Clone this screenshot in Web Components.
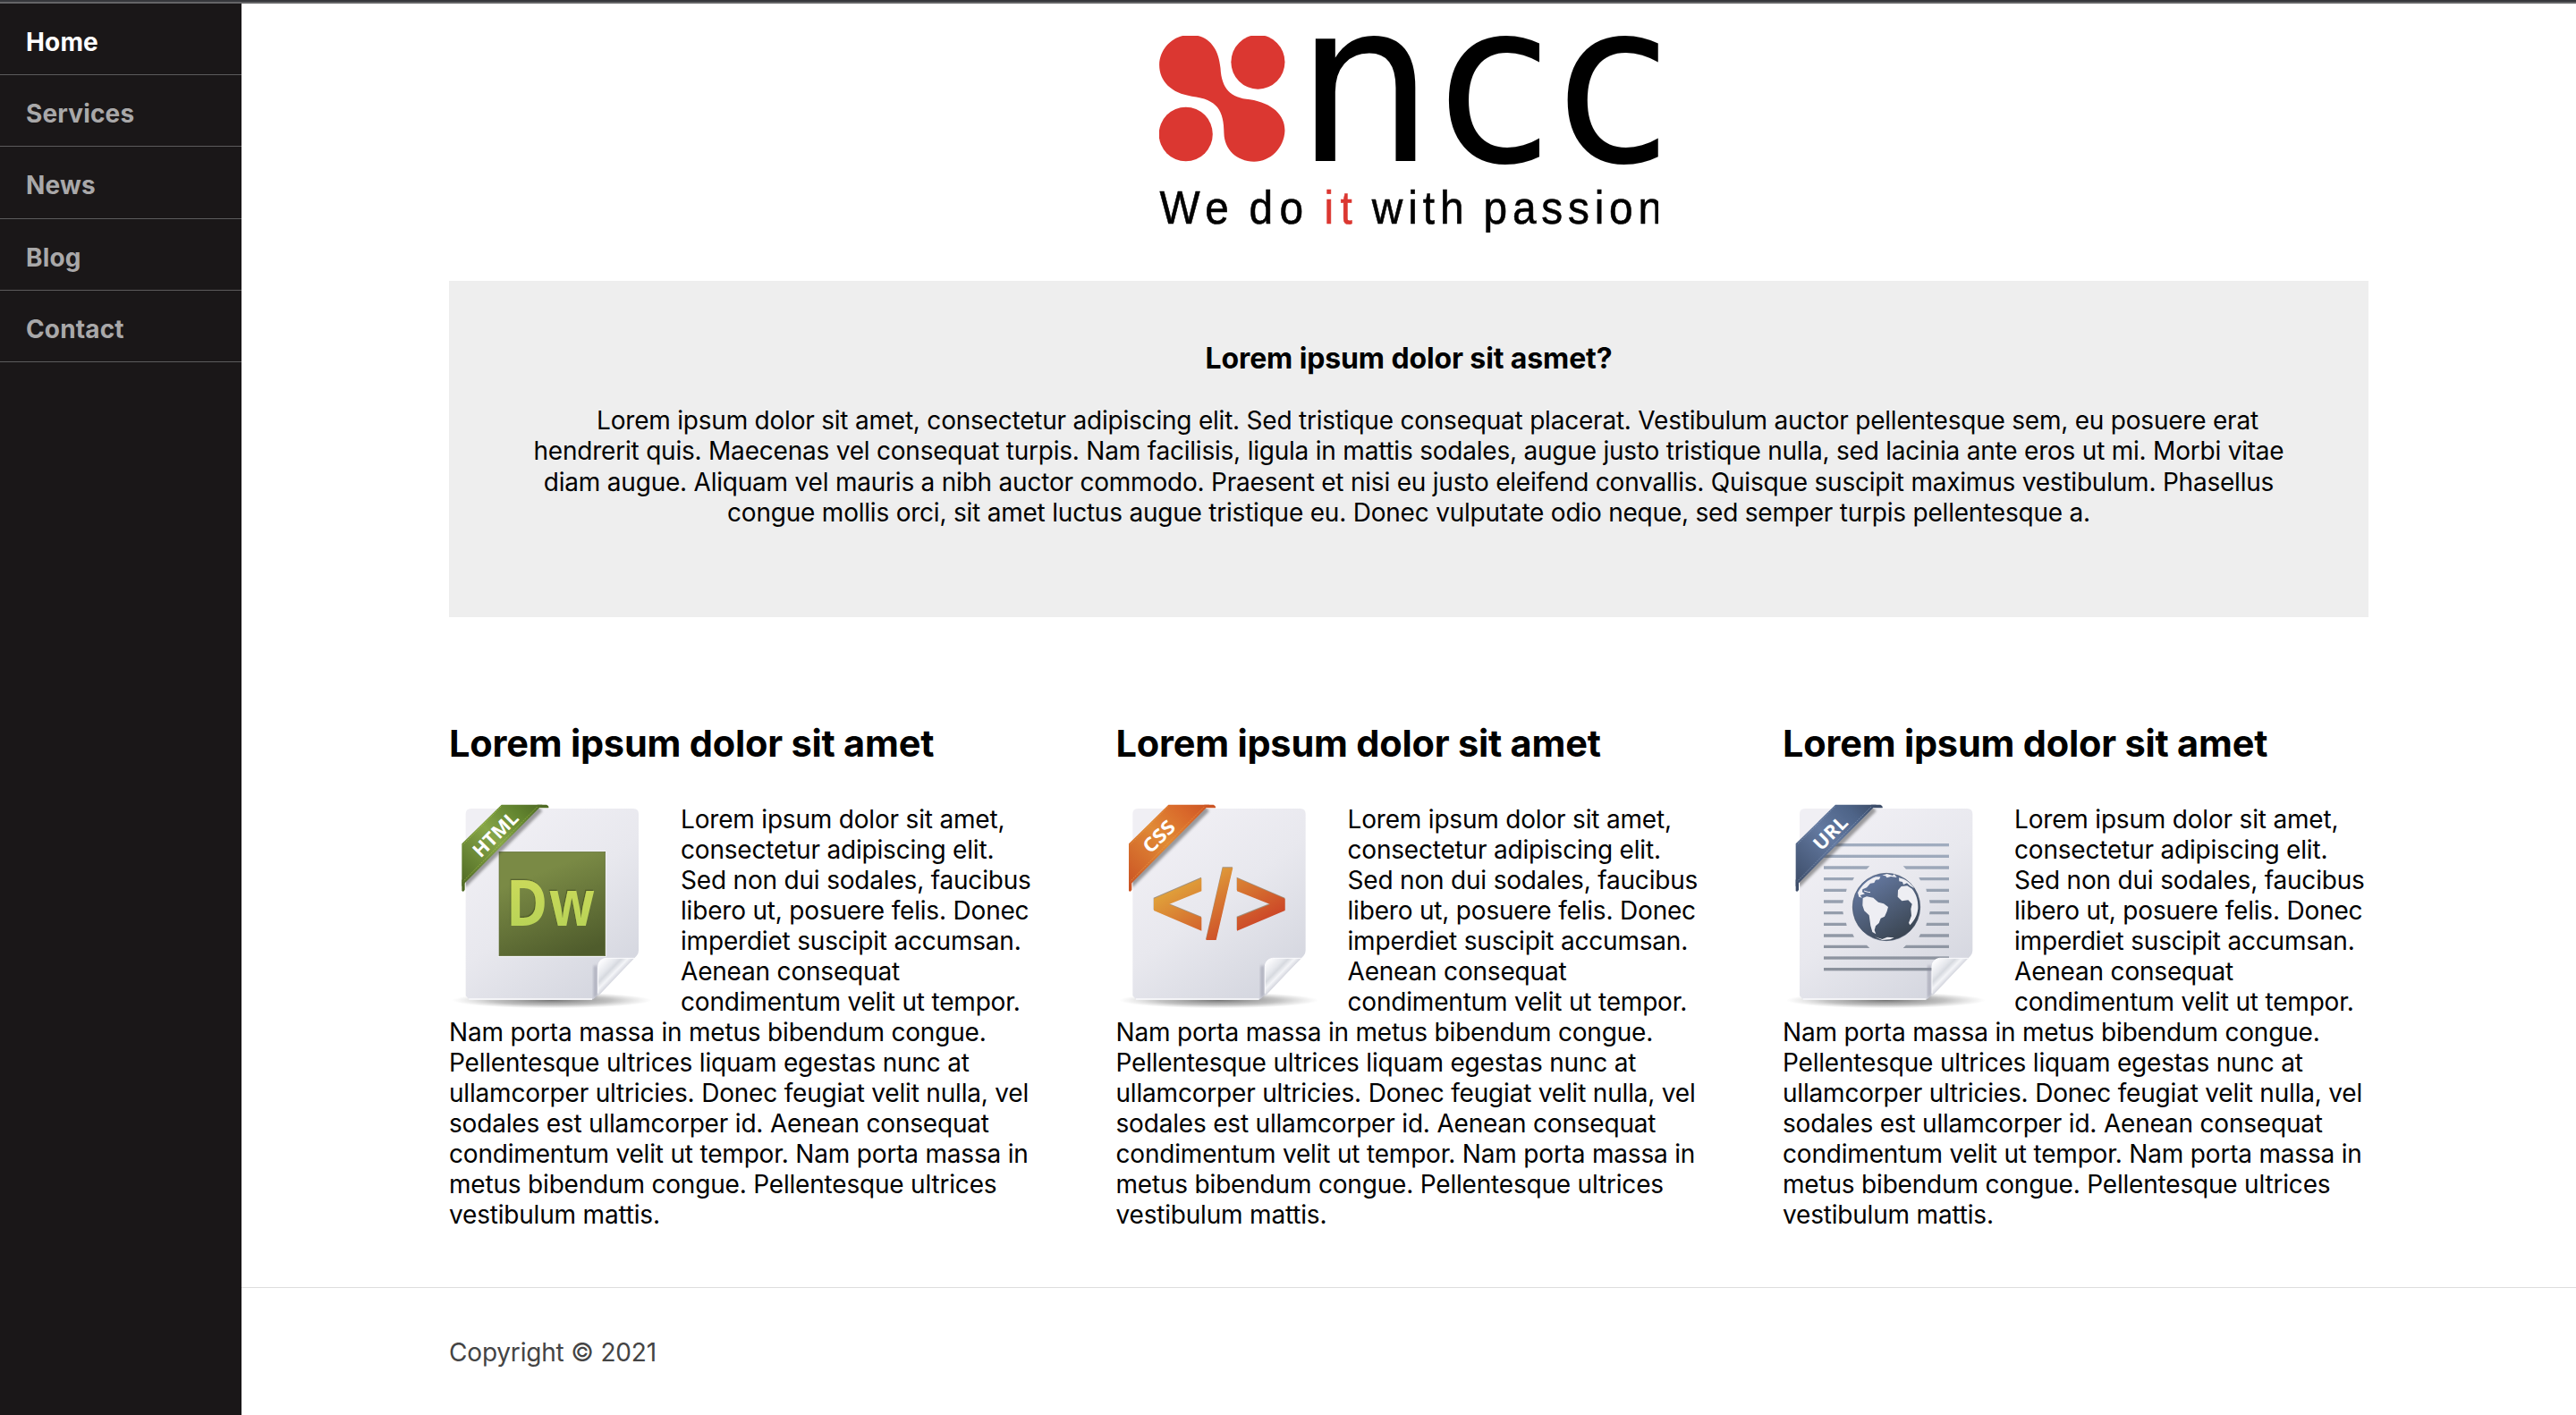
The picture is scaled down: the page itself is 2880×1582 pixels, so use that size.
<!DOCTYPE html>
<html lang="en">
<head>
<meta charset="utf-8">
<title>ncc</title>
<style>
html,body{margin:0;padding:0;background:#fff}
body{font-family:Inter,"Noto Sans",sans-serif;color:#000;width:2880px;height:1582px;overflow:hidden}
</style>
</head>
<body>
<ncc-page></ncc-page>
<script>
class Base extends HTMLElement{
  connectedCallback(){ if(!this.shadowRoot) this.attachShadow({mode:'open'}).innerHTML=this.view(); }
}

class NavItem extends Base{
  view(){return `<style>
    :host{display:block;box-sizing:border-box;height:var(--h,80px);border-bottom:1px solid #5c5b5c;padding:4px 0 0 29px;
      font-size:28px;font-weight:650;line-height:78px;letter-spacing:.15px;color:#a9a8a9}
    :host([active]){color:#fff}
    a{display:block}
  </style><a><slot></slot></a>`}
}
customElements.define('nav-item',NavItem);

class NavSide extends Base{
  view(){return `<style>
    :host{display:block;width:270px;flex:none;background:#1a1718}
  </style><nav>
    <nav-item active>Home</nav-item>
    <nav-item>Services</nav-item>
    <nav-item style="--h:81px">News</nav-item>
    <nav-item>Blog</nav-item>
    <nav-item>Contact</nav-item>
  </nav>`}
}
customElements.define('nav-side',NavSide);

class NccLogo extends Base{
  view(){return `<style>
    :host{display:block;width:558px;height:220px}
    svg{display:block;overflow:hidden}
    .n{font-family:"DejaVu Sans",sans-serif;font-size:250px}
    .t{font-family:"Liberation Sans",sans-serif;font-size:52px;stroke-width:.6px}
  </style>
  <svg width="558" height="220" viewBox="1296 40 558 220">
    <g fill="#db3731" transform="translate(1270 20) scale(.3954 .33333)">
      <path d="M66 157C68 98 108 57 153 57C206 57 234 102 239 168C242 238 268 268 322 274C386 286 421 326 421 378C419 437 380 482 334 482C284 482 250 440 249 388C249 310 230 273 158 263C100 253 66 213 66 157Z"/>
      <ellipse cx="345" cy="148" rx="76" ry="91"/>
      <ellipse cx="141" cy="390" rx="76" ry="91"/>
    </g>
    <g class="n">
      <text transform="translate(1448.8 179.7) scale(.974 1)">n</text>
      <text transform="translate(1607 179.7) scale(.935 1)">c</text>
      <text transform="translate(1739.8 179.7) scale(.935 1)">c</text>
    </g>
    <g class="t" stroke="#000">
      <text transform="translate(1296.5 250) scale(.92 1)" textLength="84">We</text>
      <text transform="translate(1396.5 250) scale(.92 1)" textLength="66">do</text>
      <text transform="translate(1480.5 250) scale(.92 1)" textLength="34" fill="#db3731" stroke="#db3731">it</text>
      <text transform="translate(1533.7 250) scale(.92 1)" textLength="112">with</text>
      <text transform="translate(1658.5 250) scale(.92 1)" textLength="217">passion</text>
    </g>
  </svg>`}
}
customElements.define('ncc-logo',NccLogo);

class HeroBox extends Base{
  view(){return `<style>
    :host{display:block;box-sizing:border-box;height:376px;background:#eee;text-align:center;padding-top:67px}
    h3{margin:0;font-size:32px;line-height:40px;font-weight:700;letter-spacing:-.12px}
    p{margin:32px 0 0;font-size:28px;line-height:34.4px;letter-spacing:-.215px;white-space:nowrap}
    p::before{content:"";display:inline-block;width:42px}
  </style><h3><slot name="title"></slot></h3><p><slot></slot></p>`}
}
customElements.define('hero-box',HeroBox);

const ART={
  html:{c:['#62842f','#86a548','#4f6a24','#b9d24a'],dx:0,label:'HTML',lx:143,ly:240,len:186,
    art:`<defs><linearGradient id="sq" x1=".3" y1="0" x2=".7" y2="1"><stop offset=".2" stop-color="#7a8a45"/><stop offset="1" stop-color="#4f5c2c"/></linearGradient>
      <linearGradient id="dw" x1="0" y1="0" x2="0" y2="1"><stop offset="0" stop-color="#d3dc5c"/><stop offset="1" stop-color="#b2d156"/></linearGradient>
      <filter id="ds" x="-10%" y="-10%" width="120%" height="120%"><feDropShadow dx="-3" dy="-4" stdDeviation="1" flood-color="#3f4c1c" flood-opacity=".6"/></filter></defs>
      <rect x="202" y="214" width="362" height="356" fill="#f6f6fa"/>
      <rect x="205" y="217" width="356" height="349" fill="url(#sq)" stroke="#5f6c38" stroke-width="2"/>
      <g font-family="Open Sans,sans-serif" font-weight="700" font-size="217" fill="url(#dw)" filter="url(#ds)"><text x="229" y="464" textLength="139" lengthAdjust="spacingAndGlyphs">D</text><text x="373" y="464" textLength="152" lengthAdjust="spacingAndGlyphs">w</text></g>`},
  css:{c:['#d9682a','#e08a36','#cb5424','#eeb04a'],dx:-1,label:'CSS',lx:152,ly:226,len:124,
    art:`<defs><linearGradient id="br" gradientUnits="userSpaceOnUse" x1="300" y1="290" x2="420" y2="500"><stop offset="0" stop-color="#e0a03a"/><stop offset="1" stop-color="#cd4a28"/></linearGradient></defs>
      <g transform="translate(15 0)"><g fill="#6b4a20" opacity=".55" transform="translate(-1 -3)"><path d="M149 374L309 305V349L200 393L309 437V482L149 414Z"/><path d="M380 271H414L358 513H324Z"/><path d="M428 305L589 374V414L428 482V437L539 393L428 349Z"/></g>
      <g fill="url(#br)"><path d="M149 374L309 305V349L200 393L309 437V482L149 414Z"/><path d="M380 271H414L358 513H324Z"/><path d="M428 305L589 374V414L428 482V437L539 393L428 349Z"/></g></g>`},
  url:{c:['#4e6488','#6379a0','#3c4c68','#9fb0cc'],dx:1,label:'URL',lx:166,ly:217,len:133,
    art:(()=>{
      const rows=[[194],[232],[270,328,440],[308,276,493],[346,251,517],[384,240,528],[422,240,528],[460,251,517],[498,276,493],[535,328,440],[573],[611]];
      const bars=rows.map(([y,a,b])=>{
        if(!a) return `<rect x="174" y="${y-5}" width="420" height="10"/>`;
        const k=Math.abs(y-403)>120?10:Math.abs(y-403)>80?5:2, t=y<403?0:k, u=k-t;
        return `<path d="M174 ${y-5}H${a-t}L${a-u} ${y+5}H174ZM${b+t} ${y-5}H594V${y+5}H${b+u}Z"/>`;
      }).join('');
      return `<defs><linearGradient id="ln" gradientUnits="userSpaceOnUse" x1="0" y1="190" x2="0" y2="615"><stop offset="0" stop-color="#a0acbf"/><stop offset="1" stop-color="#8b919c"/></linearGradient>
      <linearGradient id="gl" x1=".2" y1=".1" x2=".7" y2=".95"><stop offset="0" stop-color="#6478a0"/><stop offset="1" stop-color="#3b4653"/></linearGradient></defs>
      <g fill="url(#ln)">${bars}</g>
      <circle cx="384" cy="402" r="113" fill="url(#gl)" stroke="#445268" stroke-width="2"/>
      <g fill="#eeeef3">
      <path d="M305 372L318 367L340 371L350 380L357 386L375 391L390 402L386 416L378 434L365 440L359 456L348 466L344 480L349 493L337 486L331 465L326 430L310 415L304 397Z"/>
      <path d="M288 354C301 330 322 310 348 301L364 301L360 310L348 311L343 321L330 323L318 337L304 343L303 352L312 358L296 363L302 371L292 368Z"/>
      <path d="M423 346L434 333L454 331L470 341C486 361 491 382 490 407C488 430 477 449 463 463L459 455L468 431L466 409L470 392L457 379L436 382L422 368Z"/>
      <path d="M426 304C448 308 466 322 477 339L463 331L453 322L441 327L438 318L427 316Z"/>
      <path d="M370 296L386 291L405 297L410 292L419 303L399 300L386 304L381 298Z"/>
      <path d="M345 502L370 510L387 503L410 505L418 501L397 511L370 513Z"/>
      </g>
      <path d="M309 348l13 4l8 1" stroke="#eeeef3" stroke-width="3" fill="none"/>`})()}
};

class FileIcon extends Base{
  view(){
    const a=ART[this.getAttribute('kind')],[c1,c2,c3,c4]=a.c;
    return `<style>:host{display:block;float:left;width:259px;height:236px}svg{display:block}</style>
    <svg width="260" height="236" viewBox="${37-a.dx} 57 780 708">
    <defs>
      <linearGradient id="pg" x1=".2" y1=".1" x2=".8" y2="1"><stop offset="0" stop-color="#f0eff4"/><stop offset=".45" stop-color="#e8e8ee"/><stop offset="1" stop-color="#d3d5de"/></linearGradient>
      <linearGradient id="cu" x1=".1" y1=".1" x2=".65" y2=".65"><stop offset="0" stop-color="#fafafc"/><stop offset=".3" stop-color="#e5e7ec"/><stop offset=".42" stop-color="#d6d9df"/><stop offset=".58" stop-color="#f4f5f8"/><stop offset=".8" stop-color="#c8cad4"/><stop offset="1" stop-color="#a3a4b2"/></linearGradient>
      <linearGradient id="rb" gradientUnits="userSpaceOnUse" x1="80" y1="330" x2="350" y2="60"><stop offset="0" stop-color="${c3}"/><stop offset=".5" stop-color="${c2}"/><stop offset=".8" stop-color="${c1}"/><stop offset="1" stop-color="${c3}"/></linearGradient>
      <radialGradient id="sh"><stop offset="0" stop-color="#555" stop-opacity=".8"/><stop offset=".6" stop-color="#777" stop-opacity=".45"/><stop offset="1" stop-color="#999" stop-opacity="0"/></radialGradient>
      <filter id="b" x="-20%" y="-20%" width="140%" height="140%"><feGaussianBlur stdDeviation="5"/></filter>
      <clipPath id="pc"><path d="M93 72H673V714H93Z"/></clipPath>
    </defs>
    <ellipse cx="382" cy="715" rx="335" ry="27" fill="url(#sh)"/>
    <path d="M111 72H655Q673 72 673 90V548Q673 558 666 566L530 703Q521 714 510 714H107L93 700V90Q93 72 111 72Z" fill="url(#pg)"/>
    <path d="M104 711H517" stroke="#fbfbfd" stroke-width="5"/>
    ${a.art}
    <path d="M534 598V698L522 710V600Z" fill="#85869a" opacity=".5" filter="url(#b)"/>
    <path d="M658 574L540 698Q534 703 537 692V602Q538 578 562 574Z" fill="url(#cu)"/>
    <path d="M537 692V602Q538 578 562 574H658" fill="none" stroke="#fcfcfe" stroke-width="3"/>
    <path d="M92 337L350 80L335 64L85 314Z" fill="#333" opacity=".45" filter="url(#b)" clip-path="url(#pc)"/>
    <path d="M333 59H364Q373 63 371 70H333ZM80 310V348Q86 354 90 344V318Z" fill="${c3}"/>
    <path d="M213 59H350L88 324L80 333V190Z" fill="url(#rb)"/>
    <path d="M212 65L83 194M333 66L85 316" stroke="${c4}" stroke-width="2" stroke-dasharray="6 3" fill="none" opacity=".75"/>
    <text transform="translate(${a.lx-a.dx} ${a.ly}) rotate(-45)" font-family="Open Sans,sans-serif" font-weight="700" font-size="64" fill="#fff" textLength="${a.len}" lengthAdjust="spacingAndGlyphs">${a.label}</text>
    </svg>`}
}
customElements.define('file-icon',FileIcon);

class InfoCard extends Base{
  view(){return `<style>
    :host{display:block;width:655px}
    h2{margin:0;font-size:41.5px;line-height:50px;font-weight:700;letter-spacing:-.22px;white-space:nowrap}
    .body{margin-top:43px;font-size:28px;line-height:34px;letter-spacing:-.19px;white-space:nowrap}
  </style>
  <h2>Lorem ipsum dolor sit amet</h2>
  <div class="body"><file-icon kind="${this.getAttribute('kind')}"></file-icon>Lorem ipsum dolor sit amet,<br>consectetur adipiscing elit.<br>Sed non dui sodales, faucibus<br>libero ut, posuere felis. Donec<br>imperdiet suscipit accumsan.<br>Aenean consequat<br>condimentum velit ut tempor.<br>Nam porta massa in metus bibendum congue.<br>Pellentesque ultrices liquam egestas nunc at<br>ullamcorper ultricies. Donec feugiat velit nulla, vel<br>sodales est ullamcorper id. Aenean consequat<br>condimentum velit ut tempor. Nam porta massa in<br>metus bibendum congue. Pellentesque ultrices<br>vestibulum mattis.</div>`}
}
customElements.define('info-card',InfoCard);

class PageFooter extends Base{
  view(){return `<style>
    :host{display:block;border-top:1px solid #ddd;padding:55px 0 0 232px;font-size:28px;line-height:34px;letter-spacing:-.18px;color:#444}
  </style><slot></slot>`}
}
customElements.define('page-footer',PageFooter);

class NccPage extends Base{
  view(){return `<style>
    :host{display:flex;flex-direction:column;width:2880px;height:1582px}
    .top{height:2px;background:#36373b;border-bottom:2px solid #656567;flex:none}
    .row{display:flex;flex:1}
    main{flex:1;display:flex;flex-direction:column}
    ncc-logo{margin:36px 0 0 1026px}
    hero-box{margin:54px 232px 0}
    .cards{display:flex;justify-content:space-between;margin:116px 232px 0;height:633px}
  </style>
  <div class="top"></div>
  <div class="row"><nav-side></nav-side>
    <main>
      <ncc-logo></ncc-logo>
      <hero-box><span slot="title">Lorem ipsum dolor sit asmet?</span>Lorem ipsum dolor sit amet, consectetur adipiscing elit. Sed tristique consequat placerat. Vestibulum auctor pellentesque sem, eu posuere erat<br>hendrerit quis. Maecenas vel consequat turpis. Nam facilisis, ligula in mattis sodales, augue justo tristique nulla, sed lacinia ante eros ut mi. Morbi vitae<br>diam augue. Aliquam vel mauris a nibh auctor commodo. Praesent et nisi eu justo eleifend convallis. Quisque suscipit maximus vestibulum. Phasellus<br>congue mollis orci, sit amet luctus augue tristique eu. Donec vulputate odio neque, sed semper turpis pellentesque a.</hero-box>
      <div class="cards"><info-card kind="html"></info-card><info-card kind="css"></info-card><info-card kind="url"></info-card></div>
      <page-footer>Copyright © 2021</page-footer>
    </main>
  </div>`}
}
customElements.define('ncc-page',NccPage);
</script>
</body>
</html>
